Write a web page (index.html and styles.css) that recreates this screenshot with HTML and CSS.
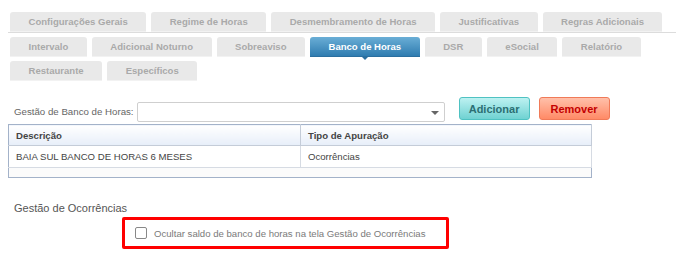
FILE: index.html
```html
<!DOCTYPE html>
<html lang="pt-BR">
<head>
  <meta charset="UTF-8">
  <title>Banco de Horas</title>
  <link rel="stylesheet" href="styles.css">
</head>
<body>
  <main class="page">
    <!-- abas -->
    <nav class="tabs">
      <div class="tab-row first">
        <span class="tab">Configurações Gerais</span>
        <span class="tab">Regime de Horas</span>
        <span class="tab">Desmembramento de Horas</span>
        <span class="tab">Justificativas</span>
        <span class="tab">Regras Adicionais</span>
      </div>
      <div class="tab-row">
        <span class="tab">Intervalo</span>
        <span class="tab">Adicional Noturno</span>
        <span class="tab">Sobreaviso</span>
        <span class="tab active">Banco de Horas</span>
        <span class="tab">DSR</span>
        <span class="tab">eSocial</span>
        <span class="tab">Relatório</span>
      </div>
      <div class="tab-row">
        <span class="tab">Restaurante</span>
        <span class="tab">Específicos</span>
      </div>
    </nav>

    <!-- banco de horas -->
    <div class="form-row">
      <label class="field-label" for="bh">Gestão de Banco de Horas:</label>
      <div class="select" id="bh"><span class="caret"></span></div>
      <button class="btn btn-add">Adicionar</button>
      <button class="btn btn-remove">Remover</button>
    </div>

    <table class="grid">
      <thead>
        <tr><th class="col-desc">Descrição</th><th>Tipo de Apuração</th></tr>
      </thead>
      <tbody>
        <tr><td class="col-desc">BAIA SUL BANCO DE HORAS 6 MESES</td><td>Ocorrências</td></tr>
        <tr class="empty"><td></td><td></td></tr>
      </tbody>
    </table>

    <h2 class="section-title">Gestão de Ocorrências</h2>
    <div class="highlight">
      <label class="check">
        <input type="checkbox">
        <span>Ocultar saldo de banco de horas na tela Gestão de Ocorrências</span>
      </label>
    </div>
  </main>
</body>
</html>
```

FILE: styles.css
```css
:root {
  --tab-bg: #e9e9e9;
  --tab-text: #a9a9a9;
  --text: #555;
  --grid-border: #a3b2c9;
}
html, body {
  margin: 0;
  padding: 0;
  background: #fff;
  font-family: "Liberation Sans", Arial, sans-serif;
  color: var(--text);
}
.page {
  padding-top: 12px;
}

/* ───── abas ───── */
.tabs {
  display: flex;
  flex-direction: column;
  gap: 4px;
}
.tab-row {
  display: flex;
  gap: 5px;
  padding-left: 10px;
}
.tab-row.first {
  margin-left: 8px;
  width: 666px;
  padding-left: 2px;
  border-bottom: 1px solid #dcdcdc;
  height: 20px;
}
.tab {
  height: 20px;
  line-height: 20px;
  padding: 0 18.5px;
  background: var(--tab-bg);
  color: var(--tab-text);
  font-size: 9.55px;
  font-weight: bold;
  border-radius: 3px 3px 0 0;
  white-space: nowrap;
  box-sizing: border-box;
  border-bottom: 1px solid #f2f2f2;
}
.tab.active {
  position: relative;
  color: #fff;
  background: linear-gradient(#6aaed6, #2f7cb0);
  border-bottom: 1px solid #2a6f9f;
}
.tab.active::after {
  content: "";
  position: absolute;
  left: 50%;
  bottom: -4px;
  margin-left: -4px;
  border-left: 4px solid transparent;
  border-right: 4px solid transparent;
  border-top: 4px solid #2a6f9f;
}

/* ───── formulário ───── */
.form-row {
  display: flex;
  align-items: flex-start;
  margin-top: 16px;
}
.field-label {
  margin: 9px 3px 0 14px;
  font-size: 9.7px;
  color: #666;
}
.select {
  position: relative;
  width: 308px;
  height: 20px;
  margin-top: 5px;
  box-sizing: border-box;
  border: 1px solid #cfcfcf;
  border-radius: 2px;
  background: #fff;
}
.caret {
  position: absolute;
  right: 5px;
  top: 8px;
  border-left: 4px solid transparent;
  border-right: 4px solid transparent;
  border-top: 4px solid #666;
}
.btn {
  height: 23px;
  padding: 0;
  width: 71px;
  font-family: "Liberation Sans", Arial, sans-serif;
  font-size: 11px;
  font-weight: bold;
  border-radius: 3px;
  cursor: pointer;
}
.btn-add {
  margin-left: 14px;
  color: #2b6f73;
  background: linear-gradient(#bdf1f1, #6fd2d2);
  border: 1px solid #4fc2c2;
}
.btn-remove {
  margin-left: 9px;
  color: #c40000;
  background: linear-gradient(#ffc0aa, #ff8a66);
  border: 1px solid #f07a58;
}

/* ───── tabela ───── */
.grid {
  margin: 2px 0 0 8px;
  width: 584px;
  border-collapse: collapse;
  border: 1px solid var(--grid-border);
  font-size: 9.6px;
  color: #444;
}
.grid th {
  height: 20px;
  padding: 0 7px;
  text-align: left;
  font-weight: bold;
  background: linear-gradient(#fff, #e7eef9);
  border-bottom: 1px solid #c4ccd8;
  border-right: 1px solid #c4ccd8;
}
.grid td {
  height: 21px;
  padding: 0 7px;
  border-bottom: 1px solid #d6dbe3;
  border-right: 1px solid #d6dbe3;
}
.grid .col-desc { width: 277px; }
.grid tr.empty td {
  height: 9px;
  background: #fbfbfb;
  border-right: none;
  border-bottom: none;
}

/* ───── ocorrências ───── */
.section-title {
  margin: 24px 0 0 14px;
  font-size: 11px;
  font-weight: normal;
  color: #555;
}
.highlight {
  margin: 3px 0 0 122px;
  width: 327px;
  height: 32px;
  box-sizing: border-box;
  border: 3px solid #ff0000;
  border-radius: 2px;
  display: flex;
  align-items: center;
  padding-left: 10px;
}
.check {
  display: flex;
  align-items: center;
  gap: 7px;
  font-size: 9.6px;
  color: #7a7a7a;
}
.check input {
  appearance: none;
  margin: 0;
  width: 12px;
  height: 12px;
  border: 1px solid #888;
  border-radius: 2px;
  background: #fff;
}
```
